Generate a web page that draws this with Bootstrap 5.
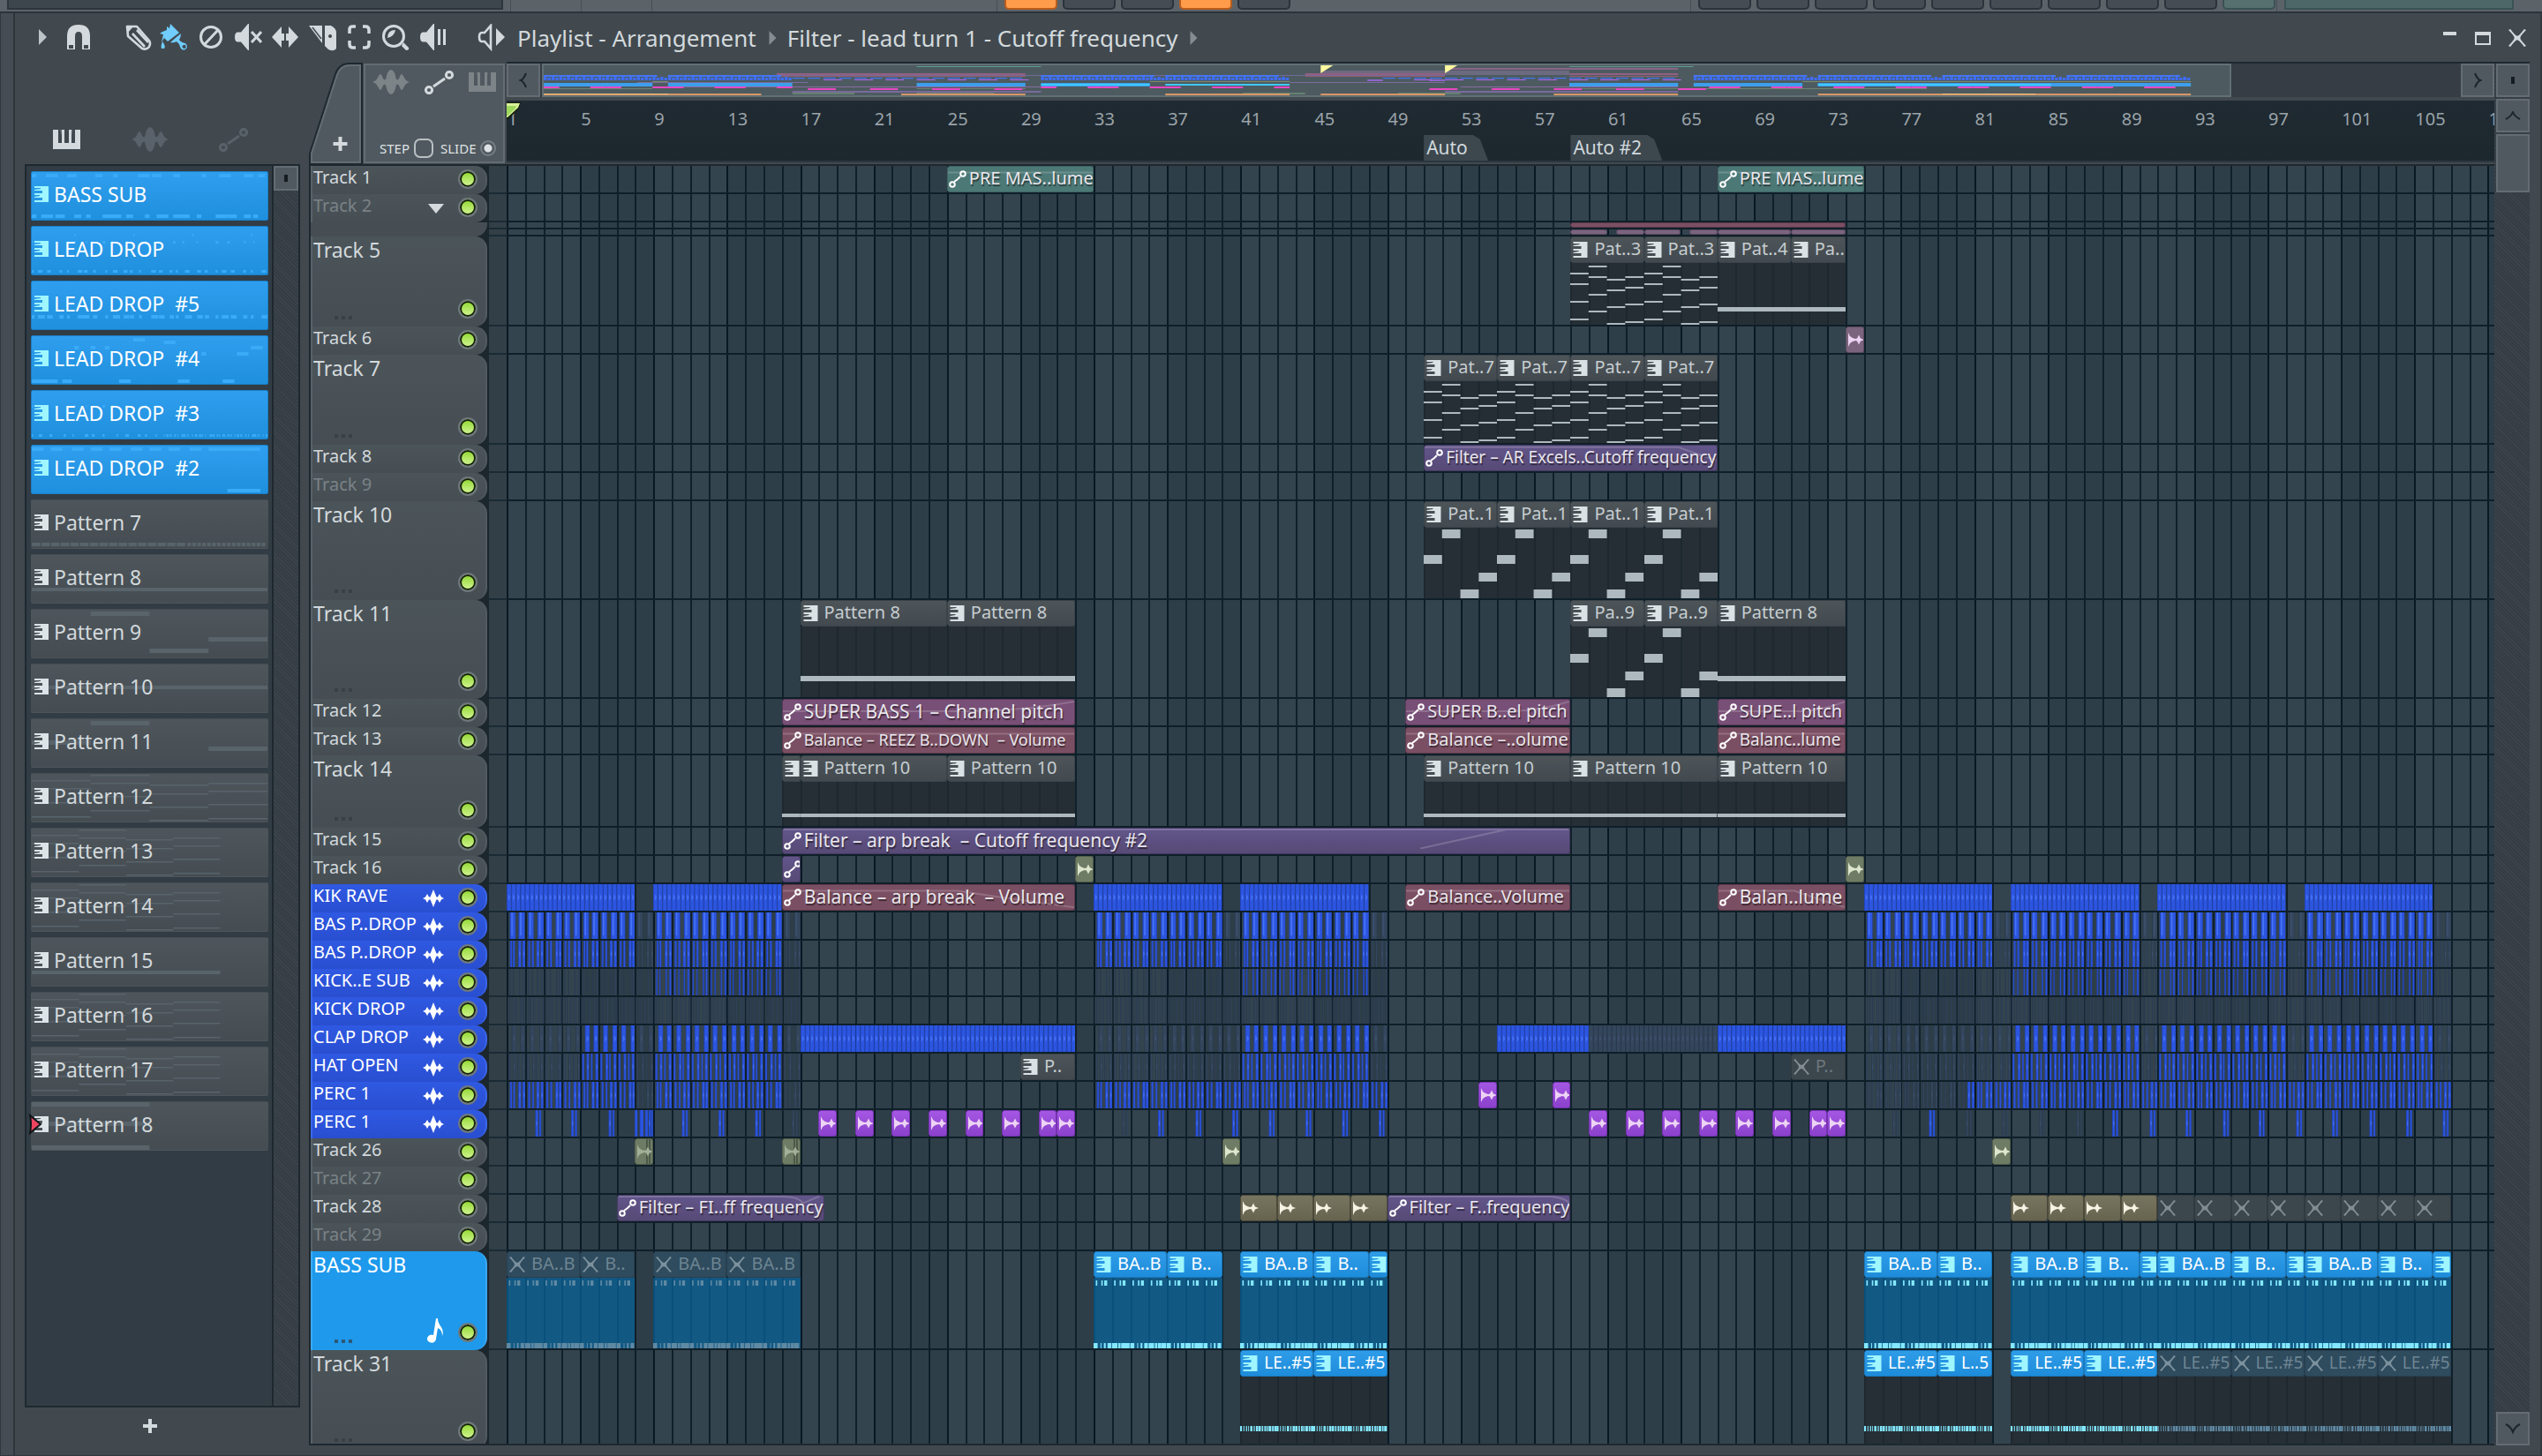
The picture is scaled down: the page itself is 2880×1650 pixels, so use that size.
<!DOCTYPE html>
<html lang="en">
<head>
<meta charset="utf-8">
<meta name="viewport" content="width=device-width, initial-scale=1">
<title>Playlist - Arrangement</title>
<link href="https://cdn.jsdelivr.net/npm/bootstrap@5.3.0/dist/css/bootstrap.min.css" rel="stylesheet">
<script src="https://cdn.jsdelivr.net/npm/bootstrap@5.3.0/dist/js/bootstrap.bundle.min.js"></script>
<style>
:root{--ink:#d3d9dc;--edge:#1e282f;--panel:#50595f;--rim:#636c72;--bars:108.36}
body{background:#41494f;color:var(--ink);font-family:"Noto Sans","Open Sans",sans-serif;font-size:20px;line-height:28px;overflow:hidden}
svg{display:block;flex-shrink:0}
button{color:inherit}
.grow0{min-width:0;min-height:0}
.ic{fill:currentColor}
.tool{border:0;background:none;padding:0;display:flex;align-items:center;justify-content:center}
/* strip of the main window above */
.topstrip{height:15px;background:#5b6369;border-bottom:2px solid #2c343b}
.topstrip .well{width:562px;height:11px;margin-left:8px;background:#3e464d;border:2px solid #2e363d;border-top:0}
.topstrip .cell{border-left:1px solid #474f55}
.pad{width:60px;height:11px;border-radius:0 0 5px 5px;background:#454c54;border:2px solid #2c333a;border-top:0}
.pad-on{background:#ff9c4c;border-color:#b85c1c}
.pad-teal{background:#55706f;border-color:#3a5152}
.lcd{height:11px;background:#4d6668;border:2px solid #3b5355;border-top:0}
/* window */
.win{border-bottom:1px solid #30383e;border-right:2px solid #30383e}
.edge-l{width:17px;background:#454c53;border-right:2px solid #2e363c;border-left:1px solid #30383e}
.edge-r{width:12px}
.titlebar{height:55px}
.toolset{padding-left:27px}
.crumb{font-size:26px;line-height:32px;white-space:pre}
.crumb a{color:var(--ink);text-decoration:none}
.sep{color:#858d92;margin:0 12px 0 14px}
/* picker */
.picker{width:333px}
.ptabs{height:116px;padding:60px 69px 0 43px}
.dim{color:#59626a}
.plist{margin-left:11px;margin-right:10px;border:2px solid var(--edge);background:#323c44}
.pitems{gap:6px;padding:6px 4px 0 5px}
.pitem{height:56px;width:100%;flex-shrink:0;border:1px solid transparent;border-radius:2px;background:linear-gradient(#4e565c,#454d53);color:var(--ink);font-size:23px;text-align:left;padding:0 0 4px 3px;gap:6px;white-space:pre}
.pitem .ghost-notes{position:absolute;inset:0;width:100%;height:100%;fill:#59636a}
.pitem>span{position:relative}
.pitem.on{background:linear-gradient(#2f9eee,#1f90dd);border-color:#1a80c8;color:#fff}
.pitem.on .ghost-notes{fill:#3aabf6}
.pitem .ic{color:#dce4e8;position:relative}
.pitem.on .ic{color:#9ff6ff}
.nowsel{position:absolute;left:-4px;top:13px;z-index:2}
.pfoot{height:42px;padding-right:28px}
.hatch{background:repeating-linear-gradient(45deg,#353d44 0 2px,#3d444b 2px 3px)}
.knob{background:var(--panel);border:2px solid var(--rim);padding:0;display:flex;align-items:center;justify-content:center;color:#1c252b}
.pscroll{width:30px;border-left:2px solid var(--edge)}
.pscroll .knob{height:28px}
.nub{width:4px;height:8px;background:#151d22}
/* playlist head */
.phead{height:116px}
.corner{width:224px}
.tabshape{width:60px}
.addtrack{position:absolute;left:27px;top:85px}
.modebox{background:var(--panel);border:2px solid var(--rim);margin:2px 2px 1px 2px}
.modebox label{font-size:15px;line-height:20px;color:#dfe3e5}
.modebox .form-check-input{margin:0;background:none;border:2px solid #b9c0c3;width:22px;height:22px;border-radius:7px;box-shadow:none;float:none}
.modebox .form-check-input[type=radio]{width:18px;height:18px;border-color:#767f84;border-radius:50%;background:radial-gradient(circle,#dde1e3 0 4px,transparent 5px)}
.minimap{height:40px;border-top:2px solid var(--edge);background:#363d44}
.minimap .knob{width:38px;height:38px}
.mapview{background:#4d5b60;border:2px solid #626f74;flex:0 1 85%;margin-left:2px}
.mapview svg{width:100%;height:34px}
.ruler{height:70px;margin-top:4px;background:linear-gradient(#1f2a32,#1c272e);overflow:hidden;border-bottom:2px solid #2b363d;color:#9ba3a8;font-size:20px}
.ruler .tick{width:calc(400%/var(--bars));flex:none;padding:7px 0 0 1px}
.marker{position:absolute;top:39px;height:31px;background:#3c474e;color:#d0d8dc;padding:0 24px 0 3px;clip-path:polygon(0 0,calc(100% - 18px) 0,calc(100% - 10px) 15%,100% 100%,0 100%);font-size:21px;line-height:28px;white-space:pre}
.playhead{position:absolute;left:0;top:2px}
/* tracks */
.tracks{border:2px solid var(--edge);border-right:0;background:#1c262d;overflow:hidden}
.thead{width:200px;height:100%;background:linear-gradient(#4b5459,#464e54);border-radius:0 14px 14px 0;border-left:2px solid #596268;border-right:2px solid #525b60;padding:0 9px 0 1px;font-size:20px;white-space:pre}
.thead .tname{line-height:26px;align-self:flex-start}
.thead.tall .tname{font-size:23px;line-height:30px}
.thead .form-check-input{width:22px;height:22px;margin:0 0 6px;align-self:flex-end;border:2px solid #6f787c;border-radius:50%;background:linear-gradient(#8ed62c,#d6f79a) padding-box;box-shadow:inset 0 0 0 2px #16220c;flex-shrink:0}
.thead.tall .form-check-input{margin-bottom:9px}
.thead.off .tname{color:#7a8286}
.thead.blue{background:linear-gradient(#2f59e2,#294ed0);border-color:#3a66ee;color:#fff}
.thead.sky{background:#1e99ec;border-color:#3aaaf4;color:#fff}
.dots{position:absolute;left:27px;bottom:8px}
.track{height:32px;position:relative}
.h8{height:8px}.h82{height:82px}.h102{height:102px}.h112{height:112px}
.headslot{width:202px;flex:none;position:relative}
.tail{height:16px;position:absolute;left:0;top:100%;width:200px;background:#464e54;border-radius:0 0 14px 0}
.prebar{width:20px;flex:none;background:#333f47;border-bottom:2px solid #1a2b35}
.lane{flex:1;min-width:0;position:relative;border-bottom:2px solid #0f1f29}
.grid{position:absolute;left:222px;right:0;top:0;bottom:0;overflow:hidden}
.bar-c{width:calc(100%/var(--bars));flex:none;border-left:2px solid #10202a;background:#34444e}
.bar-c:nth-child(8n+5),.bar-c:nth-child(8n+6),.bar-c:nth-child(8n+7),.bar-c:nth-child(8n+8){background:#2e3e48}
.bar-c:nth-child(4n+1){border-left-color:#091924}
.clip{position:absolute;top:0;height:100%;overflow:hidden}
.chead{height:30px;border-radius:3px;border:1px solid #3b444a;background:linear-gradient(#4d5559,#42494f);color:#c6cdd0;font-size:20px;line-height:26px;white-space:pre;gap:7px;padding:0 0 0 2px;overflow:hidden}
.chead span{padding-bottom:3px;position:relative}
.chead .ic{color:#dae2e5}
.env{position:absolute;inset:0;width:100%;height:100%;fill:none;stroke:rgba(255,255,255,.18);stroke-width:2}
.cbody{position:absolute;left:0;right:0;top:30px;bottom:0;background:rgba(35,43,49,.8)}
.cbody svg,.stripes{position:absolute;left:0;top:0;width:100%;height:100%}
.cbody svg{fill:#aeb8bf}
.auto .chead{gap:3px;padding-left:1px;color:#e9e6ec;text-shadow:1px 2px 1px rgba(0,0,0,.5)}
.auto .chead .ic{color:#fff}
.loose .chead{font-size:21px}
.tight .chead{font-size:19px}
.tighter .chead{font-size:18px}
.teal .chead{background:#4c7876;border-color:#3f6463}
.violet .chead{background:linear-gradient(#62558a,#574a76);border-color:#443a62}
.plum .chead{background:#784f76;border-color:#5c3a59}
.wine .chead{background:#7b4f63;border-color:#5e3a4a}
.aud .chead .ic{color:#f6f2e4}
.olive .chead{background:#6f7c65;border-color:#525e4b}
.worn .chead{background:linear-gradient(90deg,#6f7c65 12px,#4c5848 12px 14px,#6f7c65 14px 15px,#4c5848 15px 17px,#6f7c65 17px)}
.sand .chead{background:linear-gradient(#77745f,#66634f);border-color:#4c4a3a}
.orchid .chead{background:linear-gradient(#a457e2,#8b41cc);border-color:#7532b0}
.orchid .chead .ic,.rose .chead .ic{color:#edd4f4}
.olive .chead .ic{color:#dde6cd}
.worn .chead .ic{color:#a3b098}
.rose .chead{background:#7a647e;border-color:#5e4a61}
.bassc .chead{background:linear-gradient(#2f9ce8,#1d8cda);border-color:#1a79bd;color:#fff}
.bassc .chead .ic{color:#9ff6ff}
.deep .cbody{background:rgba(8,96,150,.76)}
.bassc .cbody svg{fill:#83e8ff}
.muted .chead{background:#2f4b5e;border-color:#284152;color:#6d8592}
.muted .chead .ic{color:#7b919d}
.muted .cbody svg{fill:#5f89a3}
.deadg .chead{background:#3b464d;border-color:#303a41;color:#6d777c}
.deadg .chead .ic{color:#838c91}
.only .chead{gap:0}
.slim .chead{height:6px}
.s-d{fill:#2143b8}.s-m{fill:#2c55e0}.s-l{fill:#4672f4}
.ghosted .s-d{fill:#2b3a4e}.ghosted .s-m{fill:#34465c}.ghosted .s-l{fill:#3d506c}
.vbar{width:40px;padding-left:2px;border-top:2px solid var(--edge)}
.vbar .knob{height:38px;flex-shrink:0}
.vbar .thumb{height:66px}
</style>
</head>
<body class="vh-100 d-flex flex-column">
<svg width="0" height="0" class="position-absolute" aria-hidden="true">
 <symbol id="piano" viewBox="0 0 31 22"><path d="M0 0h6v15h4V0h3v15h5V0h3v15h4V0h6v22H0z"/><path d="M8 0h3l-1 7z M19 0h3l-1 7z" opacity=".3"/></symbol>
 <symbol id="keys" viewBox="0 0 16 18"><path d="M9 0h7v18H0v-2h9v-3H0v-1l6-1v-1H0V8h9V5H0V4l7-1V2H0V0z"/></symbol>
 <symbol id="wave" viewBox="0 0 42 30"><path d="M0 15q4-1 6-5 2-4 3-4t3 5q1 2 3 1Q17 1 21 1t6 11q2 1 3-1 2-5 3-5t3 4q2 4 6 5-4 1-6 5-2 4-3 4t-3-5q-1-2-3-1-2 11-6 11t-6-11q-2-1-3 1-2 5-3 5t-3-4q-2-4-6-5z"/></symbol>
 <symbol id="auto" viewBox="0 0 33 27"><g fill="none" stroke="currentColor" stroke-width="3"><circle cx="5" cy="22" r="3.6"/><circle cx="28" cy="5" r="3.6"/><path d="M10 18 23 9"/></g></symbol>
 <symbol id="autos" viewBox="0 0 20 20"><g fill="none" stroke="currentColor" stroke-width="2"><circle cx="4" cy="16" r="2.8"/><circle cx="16" cy="4" r="2.8"/><path d="M6 13 10 10 13 7"/></g></symbol>
 <symbol id="sample" viewBox="0 0 18 16"><path d="M0 0 2 4Q4 6 8 7L10 6.500 12 2.500 14 6.500 18 8 14 9.500 12 13.500 10 9.500 8 9Q4 10 2 12L0 16z"/></symbol>
 <symbol id="cross" viewBox="0 0 18 18"><path d="M0 1 2 0Q7 7 9 7T16 0l2 1q-6 6-6 8t6 8l-2 1q-5-7-7-7t-7 7l-2-1q6-6 6-8T0 1z"/></symbol>
 <symbol id="plus" viewBox="0 0 16 16"><path d="M6 0h4v6h6v4h-6v6H6v-6H0V6h6z"/></symbol>
 <symbol id="spark" viewBox="0 0 24 20"><path d="M12 0 15.500 8.500 17 8.500 19 5 21 8.500 24 10 21 11.500 19 15 17 11.500 15.500 11.500 12 20 8.500 11.500 7 11.500 5 15 3 11.500 0 10 3 8.500 5 5 7 8.500 8.500 8.500z"/></symbol>
 <symbol id="tri" viewBox="0 0 9 18"><path d="M0 0 9 9 0 18z"/></symbol>
</svg>

<div class="topstrip d-flex flex-shrink-0">
 <div class="well"></div>
 <div class="cell ms-2" style="width:80px"></div><div class="cell" style="width:80px"></div><div class="cell" style="width:391px"></div>
 <div class="cell d-flex ps-2 pe-5" style="gap:6px;width:786px"><i class="pad pad-on"></i><i class="pad"></i><i class="pad"></i><i class="pad pad-on"></i><i class="pad"></i></div>
 <div class="cell d-flex ps-2" style="gap:6px;width:664px"><i class="pad"></i><i class="pad"></i><i class="pad"></i><i class="pad"></i><i class="pad"></i><i class="pad"></i><i class="pad"></i><i class="pad"></i><i class="pad"></i><i class="pad pad-teal"></i></div>
 <div class="cell flex-fill px-2 me-4"><div class="lcd"></div></div>
</div>

<div class="win d-flex flex-fill grow0">
 <div class="edge-l flex-shrink-0"></div>
 <div class="flex-fill d-flex flex-column grow0">
  <header class="titlebar d-flex align-items-center flex-shrink-0">
   <div class="toolset d-flex align-items-center" id="tools"></div>
   <nav class="crumb d-flex align-items-center ps-3" aria-label="Path">
    <a href="#">Playlist - Arrangement</a>
    <svg class="ic sep" width="9" height="16"><use href="#tri"/></svg>
    <a href="#">Filter - lead turn 1 - Cutoff frequency</a>
    <svg class="ic sep" width="9" height="16"><use href="#tri"/></svg>
   </nav>
   <div class="ms-auto d-flex align-items-center" style="gap:20px;margin-right:16px">
    <button class="tool" aria-label="Minimize"><svg class="ic" width="16" height="18"><path d="M0 2h15v4H0z"/></svg></button>
    <button class="tool" aria-label="Maximize"><svg class="ic" width="18" height="18"><path d="M0 2h18v15H0zM2 6v9h14V6z" fill-rule="evenodd"/></svg></button>
    <button class="tool" aria-label="Close"><svg class="ic" width="20" height="20" viewBox="0 0 18 18"><use href="#cross"/></svg></button>
   </div>
  </header>

  <div class="d-flex flex-fill grow0">
   <aside class="picker flex-shrink-0 d-flex flex-column grow0">
    <div class="ptabs d-flex justify-content-between align-items-center flex-shrink-0">
     <button class="tool" aria-label="Patterns"><svg class="ic" width="31" height="22"><use href="#piano"/></svg></button>
     <button class="tool dim" aria-label="Audio clips"><svg class="ic" width="42" height="30"><use href="#wave"/></svg></button>
     <button class="tool dim" aria-label="Automation clips"><svg class="ic" width="33" height="27"><use href="#auto"/></svg></button>
    </div>
    <div class="plist d-flex flex-fill grow0">
     <div class="pitems d-flex flex-column flex-fill" id="patterns"></div>
     <div class="pscroll hatch"><button class="knob w-100" aria-label="Scroll"><i class="nub"></i></button></div>
    </div>
    <div class="pfoot d-flex justify-content-center align-items-center flex-shrink-0"><button class="tool" aria-label="Add pattern"><svg class="ic" width="16" height="16"><use href="#plus"/></svg></button></div>
    <div class="flex-shrink-0" style="height:12px"></div>
   </aside>

   <main class="flex-fill d-flex grow0" style="padding-bottom:11px">
    <div class="flex-fill d-flex flex-column grow0">
     <div class="phead d-flex flex-shrink-0">
      <div class="corner d-flex flex-shrink-0">
       <div class="tabshape position-relative flex-shrink-0">
        <svg width="61" height="116"><path d="M1 115V104L30 14Q34 2 46 2H60V115z" fill="#50595f" stroke="#1e282f" stroke-width="2"/><path d="M3 114V104L32 15Q36 4 46 4H58V114z" fill="none" stroke="#636c72" stroke-width="2"/></svg>
        <button class="tool addtrack" aria-label="Add track"><svg class="ic" width="17" height="16"><use href="#plus"/></svg></button>
       </div>
       <div class="modebox flex-fill d-flex flex-column justify-content-between">
        <div class="d-flex justify-content-between align-items-center px-2 pt-1">
         <button class="tool" style="color:#7c8488" aria-label="Audio"><svg class="ic" width="42" height="30"><use href="#wave"/></svg></button>
         <button class="tool" aria-label="Automation"><svg class="ic" width="33" height="27"><use href="#auto"/></svg></button>
         <button class="tool" style="color:#7c8488" aria-label="Pattern"><svg class="ic" width="31" height="22"><use href="#piano"/></svg></button>
        </div>
        <div class="d-flex align-items-center justify-content-between ps-3 pe-2 pb-1">
         <label for="step">STEP</label><input class="form-check-input" type="checkbox" id="step">
         <label for="slide" class="ms-1">SLIDE</label><input class="form-check-input" type="radio" id="slide" checked>
        </div>
       </div>
      </div>
      <div class="flex-fill grow0">
       <div class="minimap d-flex">
        <button class="knob flex-shrink-0" aria-label="Scroll left"><svg width="10" height="18" fill="none" stroke="currentColor" stroke-width="2"><path d="M8 1Q5 8 2 9 5 10 8 17"/></svg></button>
        <div class="mapview"><svg id="map" viewBox="0 0 1085 34" preserveAspectRatio="none"></svg></div>
        <button class="knob ms-auto flex-shrink-0" aria-label="Scroll right"><svg width="10" height="18" fill="none" stroke="currentColor" stroke-width="2"><path d="M2 1Q5 8 8 9 5 10 2 17"/></svg></button>
       </div>
       <div class="ruler position-relative"><div class="d-flex" id="ruler"></div>
        <svg class="playhead" width="17" height="20"><path d="M0 0H16L14 7 2 19 0 19z" fill="#14200c"/><path d="M0 1H15L13 6 1 17 0 17z" fill="#d9f19a"/><path d="M0 4H11L10 7 0 16z" fill="#9ed85c"/></svg>
       </div>
      </div>
     </div>
     <div class="tracks position-relative flex-fill grow0" id="tracks"><div class="grid d-flex" id="grid"></div></div>
    </div>
    <div class="vbar d-flex flex-column flex-shrink-0 hatch" style="gap:2px">
     <button class="knob" aria-label="Menu"><i class="nub"></i></button>
     <button class="knob" aria-label="Scroll up"><svg width="18" height="10" fill="none" stroke="currentColor" stroke-width="2"><path d="M1 9Q7 6 9 1 11 6 17 9"/></svg></button>
     <div class="knob thumb"></div>
     <button class="knob mt-auto" aria-label="Scroll down"><svg width="18" height="12" fill="none" stroke="currentColor" stroke-width="2"><path d="M1 1Q7 4 9 10 11 4 17 1"/></svg></button>
    </div>
    <div class="edge-r flex-shrink-0"></div>
   </main>
  </div>
 </div>
</div>

<script>
const BARS = 108.36;
const $ = id => document.getElementById(id);
const use = (id, w, h, c = 'ic') => `<svg class="${c}" width="${w}" height="${h}"><use href="#${id}"/></svg>`;

/* toolbar: [label, slot width, icon width, svg] */
const T = [
 ['Menu', 32, 9, '<path d="M0 6 9 15 0 24z" opacity=".85"/>'],
 ['Snap', 66, 26, '<path fill-rule="evenodd" d="M0 29V14Q0 1 13 1T26 14V29H17V14Q17 9 13 9T9 14V29zM2 24v4h5v-4zM19 24v4h5v-4z"/>'],
 ['Draw', 39, 30, '<g fill="none" stroke="currentColor" stroke-width="2.600" stroke-linejoin="round"><path d="M2 3H13L27 19Q29 22 27 26 24 30 19 28L3 14z"/><path d="M8 11 22 26M13 7 26 21"/></g><path d="M2 3h7L3 10z"/>'],
 ['Paint', 45, 32, '<g fill="#70cdfd"><path d="M3 9 8 7 8 3 11 5 12 0 22 10 9 20 5 16 2 21 4 12 0 11z"/><path d="M24 11 19 15 12 21Q16 22 19 20 22 22 23 26 25 31 29 29 33 26 29 22 24 21 22 18 24 15 24 11zM27 24a2 2 0 1 1-1 3 2 2 0 0 1 1-3z" fill-rule="evenodd"/><path d="M3 20Q1 25 2 28H5Q7 25 3 20z"/></g>'],
 ['Delete', 40, 26, '<g fill="none" stroke="currentColor" stroke-width="3"><circle cx="13" cy="15" r="11.500"/><path d="M6 23 21 7"/></g>'],
 ['Mute', 42, 31, '<path d="M0 15Q0 10 3 9.500H7L15 0H16V30H15L7 20.500H3Q0 20 0 15z"/><path d="M19 9 30 21M30 9 19 21" stroke="currentColor" stroke-width="3"/>'],
 ['Slip', 42, 30, '<path d="M0 15 11 3V11H14V19H11V27zM30 15 19 3V11H16V19H19V27z"/>'],
 ['Slice', 44, 31, '<path d="M0 2H15V22zM18 2H25Q31 5 31 10V28Q28 32 22 29L18 25zM24 12a2 2 0 1 0 .1 0" fill-rule="evenodd"/><path d="M4 4 14 17" stroke="#41494f" stroke-width="1.500"/>'],
 ['Select', 39, 26, '<path fill="none" stroke="currentColor" stroke-width="3.500" d="M2 11V6Q2 3 6 3H9M17 3h3Q24 3 24 7v4M24 19v4q0 4-4 4h-3M9 27H6Q2 27 2 23V19"/>'],
 ['Zoom', 43, 31, '<circle cx="13" cy="14" r="11.500" fill="none" stroke="currentColor" stroke-width="3"/><path d="M24 21 30 27Q31 30 27 30L22 25z"/><path d="M6 16Q6 7 15 7 14 14 6 16z"/>'],
 ['Playback', 65, 29, '<path d="M0 15Q0 10 3 9.500H7L15 0H16V30H15L7 20.500H3Q0 20 0 15zM20 6h3v18h-3zM26 6h3v18h-3z"/>'],
 ['Source', 29, 31, '<path fill="none" stroke="currentColor" stroke-width="2.600" d="M2 15Q2 10 5 10H8L15 2V28L8 20H5Q2 20 2 15z"/><path d="M21 5 31 15 21 25z"/>']
];
$('tools').innerHTML = T.map(([n, s, w, p]) => `<div style="width:${s}px"><button class="tool" aria-label="${n}"><svg class="ic" width="${w}" height="31" viewBox="0 0 ${w} 31">${p}</svg></button></div>`).join('');

/* pattern picker; notes are [x, y, width] in a 100 x 54 box, height given per item */
const seq = (y, step, w, a = 0, b = 100) => { const r = []; for (let x = a, i = 0; x < b; x += step * (1 + (i++ * 7 % 5) / 4)) r.push([x, y, w * (1 + i * 3 % 4 / 2)]); return r; };
const chords = [[7, 16, 32, 48], [1, 10, 25, 41], [12, 22, 37, 52], [10, 19, 34, 50]];
const chordNotes = chords.flatMap((c, i) => c.map(y => [i * 20, y, 20]));
const P = [
 ['BASS SUB', 4, [...seq(2, 6, 2), ...seq(48, 4, 2)]], ['LEAD DROP', 3, [...seq(16, 4, .5), ...seq(49, 2.6, .8), [18, 8, .6], [43, 8, .6], [68, 8, .6], [93, 8, .6]]],
 ['LEAD DROP  #5', 4, seq(38, 2.6, 1.2)], ['LEAD DROP  #4', 4, [[43, 2, 5], [56, 5, 5], [18, 11, 2], [25, 11, 2], [31, 11, 2], [93, 11, 5], [72, 18, 2], [87, 18, 5], [0, 49, 11], [13, 49, 4], [37, 49, 5], [62, 49, 5], [81, 49, 5]]],
 ['LEAD DROP  #3', 3, [...seq(16, 4, .4, 0, 55), ...seq(49, 3, .6, 0, 55), ...seq(49, 1, .4, 56, 100)]], ['LEAD DROP  #2', 4, [[0, 2, 5], [8, 2, 5], [17, 2, 5], [25, 2, 5], [33, 2, 5], [42, 2, 5], [50, 2, 5], [58, 2, 5], [67, 2, 5], [75, 2, 22], [83, 49, 14]]],
 ['Pattern 7', 4, [...Array.from({length: 16}, (_, i) => [i * 4.1, 48, 3.6]), ...Array.from({length: 16}, (_, i) => [66 + i * 2.1, 48, 1.6])]], ['Pattern 8', 4, [[0, 37, 100]]],
 ['Pattern 9', 5, [[25, 2, 25], [75, 31, 25], [50, 44, 25]]], ['Pattern 10', 4, [[0, 24, 100]]], ['Pattern 11', 5, [[25, 2, 25], [0, 24, 25], [75, 31, 25]]],
 ['Pattern 12', 1.5, chordNotes.map(([x, y]) => [x * 1.25, y, 25])], ['Pattern 13', 1.5, chordNotes], ['Pattern 14', 1.5, chordNotes],
 ['Pattern 15', 4, [[0, 37, 80]]], ['Pattern 16', 1.5, chordNotes], ['Pattern 17', 1.5, chordNotes], ['Pattern 18', 5, [[0, 0, 50], [0, 22, 50], [0, 49, 50]]]
];
$('patterns').innerHTML = P.map(([n, h, notes], i) => `<button class="pitem position-relative d-flex align-items-center ${i < 6 ? 'on' : ''}">
 <svg class="ghost-notes" viewBox="0 0 100 54" preserveAspectRatio="none">${notes.map(([x, y, w]) => `<rect x="${x}" y="${y}" width="${Math.min(w, 100 - x)}" height="${h}"/>`).join('')}</svg>
 ${use('keys', 16, 18)}<span>${n}</span>${i == 17 ? '<svg class="nowsel" width="16" height="24"><path d="M2 2 14 12 2 22Q4 12 2 2z" fill="#ec4460" stroke="#10161a" stroke-width="2"/></svg>' : ''}</button>`).join('');

/* ruler and grid */
let r = ''; for (let b = 1; b < 110; b += 4) r += `<div class="tick">${b}</div>`;
$('ruler').innerHTML = r;
[[51, 'Auto'], [59, 'Auto #2']].forEach(([b, t]) => $('ruler').insertAdjacentHTML('afterend', `<div class="marker" style="left:${(b - 1) / BARS * 100}%">${t}</div>`));
$('grid').innerHTML = '<div class="bar-c"></div>'.repeat(109);

/* hit patterns inside one bar: [start, end, light core] */
const HITS = {
 dense: [0, .25, .5, .75].map(x => [x, x + .25, 1]),
 bas: [[.14, .45, 2], [.64, .99, 2]],
 bas2: [[.15, .26, 0], [.33, .45, 0], [.62, .78, 1], [.83, .99, 1]],
 kicke: [[.12, .2, 0], [.33, .4, 0], [.66, .74, 0], [.85, .96, 0]],
 kick: [[.02, .06, 0], [.14, .2, 0], [.26, .34, 0], [.44, .54, 0], [.68, .78, 0], [.88, .96, 0]],
 clap: [[.24, .5, 1], [.74, .99, 1]],
 hat: [[.08, .2, 0], [.36, .5, 1], [.58, .68, 0], [.82, .97, 1]],
 perc: [[.14, .26, 0], [.35, .46, 0], [.62, .78, 1], [.84, .99, 1]],
 pair: [[.53, .68, 1], [.72, .84, 0]],
 fill: [[0, .16, 0], [.26, .48, 0], [.54, .7, 0], [.72, .84, 1], [.88, 1, 0]]
};
const pos = (a, b) => `left:${((a - 1) / BARS * 100).toFixed(4)}%;width:${((b - a) / BARS * 100).toFixed(4)}%`;
function hits(kind, a, b, ghost) {
 let s = '';
 for (let k = Math.floor(a); k < b; k++) HITS[kind].forEach(([x, y, c], i) => {
  x += k - a; y += k - a; if (x < 0 || y > b - a + .01) return;
  const w = y - x, j = kind == 'dense' ? 0 : (k * 3 + i * 5) % 4 * .012; x += j;
  s += `<rect class="s-d" x="${x.toFixed(3)}" width="${w.toFixed(3)}" height="30"/><rect class="s-m" x="${(x + .04).toFixed(3)}" width="${(w - .06).toFixed(3)}" height="30"/>`;
  if (c == 2) s += `<rect class="s-l" x="${(x + w * .25).toFixed(3)}" width="${(w * .25).toFixed(3)}" height="26"/>`;
  if (c == 1) s += `<path class="s-l" d="M${(x + w * .35).toFixed(3)} 11L${(x + w * .8).toFixed(3)} 15 ${(x + w * .35).toFixed(3)} 19z"/>`;
 });
 return `<div class="clip ${ghost ? 'ghosted' : ''}" style="${pos(a, b)}"><svg class="stripes" viewBox="0 0 ${b - a} 30" preserveAspectRatio="none">${s}</svg></div>`;
}
const runs = (kind, str) => str.split(' ').map(t => { const g = t[0] == 'g', [a, b] = t.replace('g', '').split('-').map(Number); return hits(kind, a, b, g); }).join('');
function clip(cls, a, b, icon, text, h, body, env) {
 const sz = {keys: [17, 18], autos: [20, 20], sample: [18, 16], cross: [18, 18]}[icon];
 return `<div class="clip ${cls}" style="${pos(a, b)}">${body !== undefined ? `<div class="cbody"><svg viewBox="0 0 ${b - a} ${h - 32}" preserveAspectRatio="none">${body}</svg></div>` : ''}<div class="chead d-flex align-items-center position-relative">${env ? `<svg class="env" viewBox="0 0 100 30" preserveAspectRatio="none"><path vector-effect="non-scaling-stroke" d="${env}"/></svg>` : ''}${icon ? use(icon, ...sz) : ''}${text ? `<span>${text}</span>` : ''}</div></div>`;
}
const A = (c, a, b, t, env) => clip('auto ' + c, a, b, 'autos', t, 0, undefined, env);
const S = (c, ...xs) => xs.map(x => clip('aud only ' + c, x, x + 1, 'sample')).join('');
const rect = (x, y, w, h) => `<rect x="${x}" y="${y}" width="${w}" height="${h}"/>`;
const CH = [[11, 23, 43, 63], [3, 15, 35, 54], [18, 30, 49, 68], [15, 27, 46, 66]].map((c, i) => c.map(y => rect(i, y, 1, 2)).join('')).join('');
const ARP = [31, 2, 70, 51].map((y, i) => rect(i, y, 1, 10)).join('');
const K = (a, b, t, h, body, c = '') => clip(c, a, b, 'keys', t, h, body);
const LINE = (a, b, y, h) => rect(0, y, b - a, h);
const TOP = 'M0 7H100', FALL = 'M0 7H60Q80 18 100 27', RISE = 'M0 14H65Q85 12 100 2';

const bassNotes = n => { let s = ''; for (let k = 0; k < n; k++) { [[.12, .08], [.42, .08], [.58, .16]].forEach(([x, w]) => s += rect(k + x, 3, w, 6)); [[0, .22], [.38, .05], [.56, .1], [.76, .2]].forEach(([x, w]) => s += rect(k + x * (k % 2 ? .9 : 1), 74, w + (k % 2 ? .08 : 0), 6)); } return s; };
const leadNotes = n => { let s = ''; for (let k = 0; k < n; k++)[[0, .1], [.18, .05], [.32, .06], [.44, .04], [.55, .12], [.74, .06], [.86, .12]].forEach(([x, w]) => s += rect(k + x, 56, w + (k % 2) * .03, 6)); return s; };
const B = (str, mk, cls) => str.split(' ').map(t => { const [r, n] = t.split(':'); const g = r[0] == 'g', [a, b] = r.replace('g', '').split('-').map(Number);
 return clip('bassc ' + cls + (g ? ' muted' : '') + (b - a == 1 ? ' only' : ''), a, b, g ? 'cross' : 'keys', n || '', 112, mk(b - a)); }).join('');

const SOLID = '1-8 g8-9 9-16 g16-17 33-40 g40-41 41-48 g48-49 75-82 g82-83 83-90 g90-91 91-98 g98-99 99-106 g106-107';
const RIGHT = 'g33-41 41-48 g48-49 g75-83 83-90 g90-91 91-98 g98-99 99-106 g106-107';
const TRK = [
 ['Track 1', 32, '', A('teal', 25, 33, 'PRE MAS..lume', TOP) + A('teal', 67, 75, 'PRE MAS..lume', TOP)],
 ['Track 2', 32, 'off fold', ''],
 ['', 8, '', clip('wine slim', 59, 74)],
 ['', 8, '', [[59, 61], [61.5, 63], [63, 65], [65.5, 67], [67, 71], [71, 74]].map(([a, b]) => clip('rose slim', a, b)).join('')],
 ['Track 5', 102, '', K(59, 63, 'Pat..3', 102, CH) + K(63, 67, 'Pat..3', 102, CH) + K(67, 71, 'Pat..4', 102, LINE(0, 4, 50, 5)) + K(71, 74, 'Pa..', 102, LINE(0, 3, 50, 5))],
 ['Track 6', 32, '', S('rose', 74)],
 ['Track 7', 102, '', [51, 55, 59, 63].map(a => K(a, a + 4, 'Pat..7', 102, CH)).join('')],
 ['Track 8', 32, '', A('violet tight', 51, 67, 'Filter – AR Excels..Cutoff frequency', 'M0 2H87L100 18')],
 ['Track 9', 32, 'off', ''],
 ['Track 10', 112, '', [51, 55, 59, 63].map(a => K(a, a + 4, 'Pat..1', 112, ARP)).join('')],
 ['Track 11', 112, '', K(17, 25, 'Pattern 8', 112, LINE(0, 8, 56, 6)) + K(25, 32, 'Pattern 8', 112, LINE(0, 7, 56, 6)) + K(59, 63, 'Pa..9', 112, ARP) + K(63, 67, 'Pa..9', 112, ARP) + K(67, 74, 'Pattern 8', 112, LINE(0, 7, 56, 6))],
 ['Track 12', 32, '', A('plum loose', 16, 32, 'SUPER BASS 1 – Channel pitch', RISE) + A('plum', 50, 59, 'SUPER B..el pitch', RISE) + A('plum', 67, 74, 'SUPE..l pitch', RISE)],
 ['Track 13', 32, '', A('wine tighter', 16, 32, 'Balance – REEZ B..DOWN  – Volume', TOP) + A('wine', 50, 59, 'Balance –..olume', TOP) + A('wine tight', 67, 74, 'Balanc..lume', TOP)],
 ['Track 14', 82, '', K(16, 17, '', 82, LINE(0, 1, 36, 4), 'only') + [[17, 25], [25, 32], [51, 59], [59, 67], [67, 74]].map(([a, b]) => K(a, b, 'Pattern 10', 82, LINE(a, b, 36, 4))).join('')],
 ['Track 15', 32, '', A('violet loose', 16, 59, 'Filter – arp break  – Cutoff frequency #2', 'M0 1H100M81 24L92 1')],
 ['Track 16', 32, '', A('violet', 16, 17, '') + S('olive', 32, 74)],
 ['KIK RAVE', 32, 'blue', runs('dense', '1-8 9-16 33-40 41-48 75-82 83-90 91-98 99-106') + A('wine loose', 16, 32, 'Balance – arp break  – Volume', FALL) + A('wine', 50, 59, 'Balance..Volume', TOP) + A('wine loose', 67, 74, 'Balan..lume', FALL)],
 ['BAS P..DROP', 32, 'blue', runs('bas', SOLID)],
 ['BAS P..DROP', 32, 'blue', runs('bas2', SOLID)],
 ['KICK..E SUB', 32, 'blue', runs('kicke', 'g1-9 9-16 g16-17 ' + RIGHT)],
 ['KICK DROP', 32, 'blue', runs('kick', 'g1-17 g33-49 g75-107')],
 ['CLAP DROP', 32, 'blue', runs('clap', 'g1-5 5-8 g8-9 9-16 g16-17 ' + RIGHT) + runs('dense', '17-32 55-60 g60-67 67-74')],
 ['HAT OPEN', 32, 'blue', runs('hat', 'g1-5 5-8 g8-9 9-16 g16-17 ' + RIGHT) + clip('', 29, 32, 'keys', 'P..') + clip('deadg', 71, 74, 'cross', 'P..')],
 ['PERC 1', 32, 'blue', runs('perc', '1-8 g8-9 9-16 g16-17 33-49 g75-80.5 80.5-107') + S('orchid', 54, 58)],
 ['PERC 1', 32, 'blue', runs('pair', '2-3 4-5 6-7 10-11 12-13 14-15 g16-17 g34-35 36-37 38-39 40-41 42-43 44-45 46-47 48-49 g76-77 78-79 g80-81 g82-83 g84-85 g86-87 88-89 90-91 92-93 94-95 96-97 98-99 100-101 102-103 104-105 106-107') + runs('fill', '8-9') + S('orchid', 18, 20, 22, 24, 26, 28, 30, 31, 60, 62, 64, 66, 68, 70, 72, 73)],
 ['Track 26', 32, '', S('olive worn', 8, 16) + S('olive', 40, 82)],
 ['Track 27', 32, 'off', ''],
 ['Track 28', 32, '', A('violet', 7, 18.3, 'Filter – FI..ff frequency', 'M0 1H80Q88 1 90 9L98 1') + A('violet', 49, 59, 'Filter – F..frequency', 'M0 1H90Q98 3 100 10') + [41, 43, 45, 47, 83, 85, 87, 89].map(a => clip('aud sand', a, a + 2, 'sample')).join('') + [91, 93, 95, 97, 99, 101, 103, 105].map(a => clip('deadg', a, a + 2, 'cross')).join('')],
 ['Track 29', 32, 'off', ''],
 ['BASS SUB', 112, 'sky', B('g1-5:BA..B g5-8:B.. g9-13:BA..B g13-17:BA..B 33-37:BA..B 37-40:B.. 41-45:BA..B 45-48:B.. 48-49 75-79:BA..B 79-82:B.. 83-87:BA..B 87-90:B.. 90-91 91-95:BA..B 95-98:B.. 98-99 99-103:BA..B 103-106:B.. 106-107', bassNotes, 'deep')],
 ['Track 31', 112, '', B('41-45:LE..#5 45-49:LE..#5 75-79:LE..#5 79-82:L..5 83-87:LE..#5 87-91:LE..#5 g91-95:LE..#5 g95-99:LE..#5 g99-103:LE..#5 g103-107:LE..#5', leadNotes, 'tight')]
];
$('tracks').insertAdjacentHTML('beforeend', TRK.map(([n, h, c, clips], i) => {
 const tall = h > 40, icon = c == 'blue' ? use('spark', 24, 20, 'ic me-3 align-self-center') : c == 'sky' ? '<svg class="ic me-3 align-self-end mb-2" width="20" height="28"><path d="M11 0h2q0 5 4 10 3 5 1 10 0-7-5-9l-2 12a5 4.500 0 1 1-3-4z"/></svg>' : /fold/.test(c) ? '<svg class="ic me-3 align-self-center" width="18" height="12"><path d="M0 1h18L9 12z"/></svg>' : '';
 return `<div class="track d-flex ${h != 32 ? 'h' + h : ''}"><div class="headslot">${n ? `<div class="thead d-flex ${c} ${tall ? 'tall' : ''}"><label class="tname flex-fill" for="t${i}">${n}</label>${icon}<input type="checkbox" class="form-check-input" id="t${i}" checked></div>${tall ? '<svg class="dots" width="22" height="4" fill="#343c42" opacity=".7"><path d="M0 0h4v4H0zM8 0h4v4H8zM16 0h4v4h-4z"/></svg>' : ''}${/fold/.test(c) ? '<div class="tail"></div>' : ''}` : ''}</div><div class="prebar"></div><div class="lane">${clips}</div></div>`;
}).join(''));

/* overview strip: colour, y, height, then from-to pairs in bars */
const M = [
 ['#5c9a94', 1, 1, '25-33 67-75'], ['#8b6489', 3, 2, '59-74'], ['#6c6a80', 6, 5, '51-67'], ['#935f82', 9, 2, '16-32 50-59 67-74'], ['#935f72', 12, 1, '16-32 50-59 67-74'], ['#716a95', 11, 1, '16-59'],
 ['#8f64c8', 16, 2, '54-55 58-59'], ['#7d6a9e', 19, 1, '7-18 49-59'], ['#7b8a6a', 18, 1, '8-9 40-41 82-83 41-49 83-107'], ['#3d9fec', 20, 4, '1-8 9-17 33-40 75-82 83-107 25-32 67-74'], ['#3fc8ff', 21, 2, '41-49 33-40 83-98'], ['#8a6aa0', 24, 1, '9-33 60-74'],
 ['#6d8272', 26, 1, '1-8 25-32 67-90'], ['#786a9c', 29, 2, '17-33 59-74'], ['#65826f', 31, 2, '17-21 25-30 46-50 56-60'], ['#d69766', 32, 2, '1-15 24-32 41-49 51-59 66-74 83-107'], ['#eebc7d', 32, 1, '1-9 91-97']
];
let m = M.map(([c, y, h, s]) => s.split(' ').map(t => { const [a, b] = t.split('-'); return `<rect x="${a * 10 - 10}" y="${y}" width="${(b - a) * 10}" height="${h}" fill="${c}"/>`; }).join('')).join('');
[[1, 17], [33, 49], [75, 107]].forEach(([a, b]) => { for (let k = a; k < b; k++) { m += `<rect x="${k * 10 - 10}" y="11" width="${(k - a) % 8 == 7 ? 3 : 10}" height="2" fill="#4476f2"/>`; for (let j = 0; j < 4; j++) m += `<rect x="${k * 10 - 10 + j * 2.5}" y="${13 + j % 2}" width="2" height="${4 - j % 2}" fill="#3f6cf0"/>`; if (k % 4 == 1 || k % 4 == 0) m += `<rect x="${k * 10 - 10}" y="24" width="10" height="2" fill="#ea48c4"/>`; } });
[[17, 32], [55, 74]].forEach(([a, b]) => { for (let k = a; k < b; k++) { m += `<rect x="${k * 10 - 10}" y="14" width="8" height="1.200" fill="#4476f2"/>`; if (k % 2 == 0) m += `<rect x="${k * 10}" y="16" width="12" height="1" fill="#b565f4"/>`; if (k % 4 == 1) m += `<rect x="${k * 10}" y="26" width="18" height="2" fill="#ea48c4"/>`; } });
m += '<path d="M500 0h8l-8 9zM580 0h8l-8 9z" fill="#fdf9a0"/>';
$('map').innerHTML = m;
</script>
</body>
</html>
